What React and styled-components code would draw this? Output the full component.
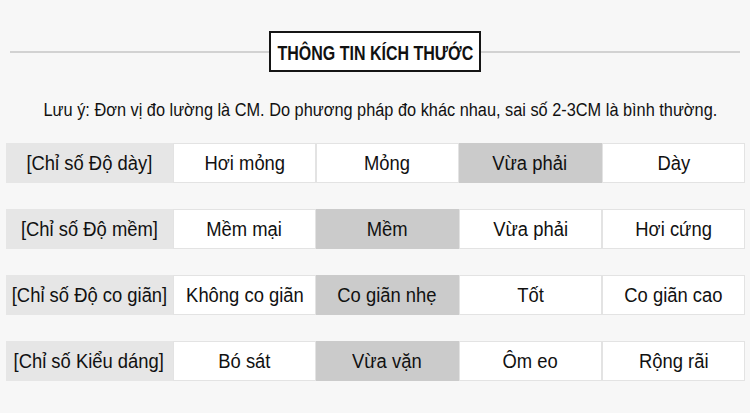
import React from "react";
import styled, { createGlobalStyle } from "styled-components";

const GlobalStyle = createGlobalStyle`
  html, body {
    margin: 0;
    padding: 0;
    background: #f7f7f7;
  }
  body {
    font-family: "Liberation Sans", Arial, sans-serif;
    color: #111;
  }
`;

const rows = [
  { label: "[Chỉ số Độ dày]", items: ["Hơi mỏng", "Mỏng", "Vừa phải", "Dày"], active: 2 },
  { label: "[Chỉ số Độ mềm]", items: ["Mềm mại", "Mềm", "Vừa phải", "Hơi cứng"], active: 1 },
  { label: "[Chỉ số Độ co giãn]", items: ["Không co giãn", "Co giãn nhẹ", "Tốt", "Co giãn cao"], active: 1 },
  { label: "[Chỉ số Kiểu dáng]", items: ["Bó sát", "Vừa vặn", "Ôm eo", "Rộng rãi"], active: 1 },
];

const App = () => {
  return (
    <Page>
      <GlobalStyle />
      <Header>
        <Rule />
        <TitleBox>
          <TitleText>THÔNG TIN KÍCH THƯỚC</TitleText>
        </TitleBox>
        <Rule />
      </Header>
      <Note>
        <NoteText>
          Lưu ý: Đơn vị đo lường là CM. Do phương pháp đo khác nhau, sai số 2-3CM là bình thường.
        </NoteText>
      </Note>
      <Table>
        {rows.map((row) => (
          <Row key={row.label}>
            <Cell $variant="label">
              <CellText>{row.label}</CellText>
            </Cell>
            {row.items.map((item, i) => (
              <Cell key={item} $variant={i === row.active ? "on" : "plain"}>
                <CellText>{item}</CellText>
              </Cell>
            ))}
          </Row>
        ))}
      </Table>
    </Page>
  );
};

export default App;

const Page = styled.div`
  width: 750px;
  min-height: 413px;
  padding-top: 31px;
  box-sizing: border-box;
  background: #f7f7f7;
`;

const Header = styled.div`
  display: flex;
  align-items: center;
  padding: 0 10px;
  height: 41px;
`;

const Rule = styled.div`
  flex: 1;
  height: 2px;
  background: #d2d2d2;
`;

const TitleBox = styled.div`
  width: 212px;
  height: 41px;
  box-sizing: border-box;
  border: 2px solid #151515;
  display: flex;
  align-items: center;
  justify-content: center;
  background: #fff;
`;

const TitleText = styled.span`
  display: inline-block;
  font-size: 20px;
  font-weight: 700;
  white-space: nowrap;
  transform: scaleX(0.8);
  padding-top: 3px;
`;

const Note = styled.div`
  margin-top: 28px;
  padding-left: 10px;
  height: 20px;
  display: flex;
  justify-content: center;
  align-items: center;
`;

const NoteText = styled.span`
  display: inline-block;
  font-size: 18px;
  white-space: nowrap;
  transform: scaleX(0.907);
`;

const Table = styled.div`
  margin-top: 23px;
  margin-left: 6px;
  display: flex;
  flex-direction: column;
  gap: 26px;
`;

const Row = styled.div`
  display: grid;
  grid-template-columns: 167px repeat(4, 143px);
  height: 40px;
`;

const cellBg = {
  label: "#e6e6e6",
  on: "#cbcbcb",
  plain: "#ffffff",
};

const Cell = styled.div`
  display: flex;
  align-items: center;
  justify-content: center;
  box-sizing: border-box;
  white-space: nowrap;
  background: ${(p) => cellBg[p.$variant]};
  border: 1px solid ${(p) => (p.$variant === "plain" ? "#e3e3e3" : cellBg[p.$variant])};
  border-left-width: ${(p) => (p.$variant === "plain" ? "1px" : "0")};
`;

const CellText = styled.span`
  display: inline-block;
  font-size: 20px;
  transform: scaleX(0.92);
`;
